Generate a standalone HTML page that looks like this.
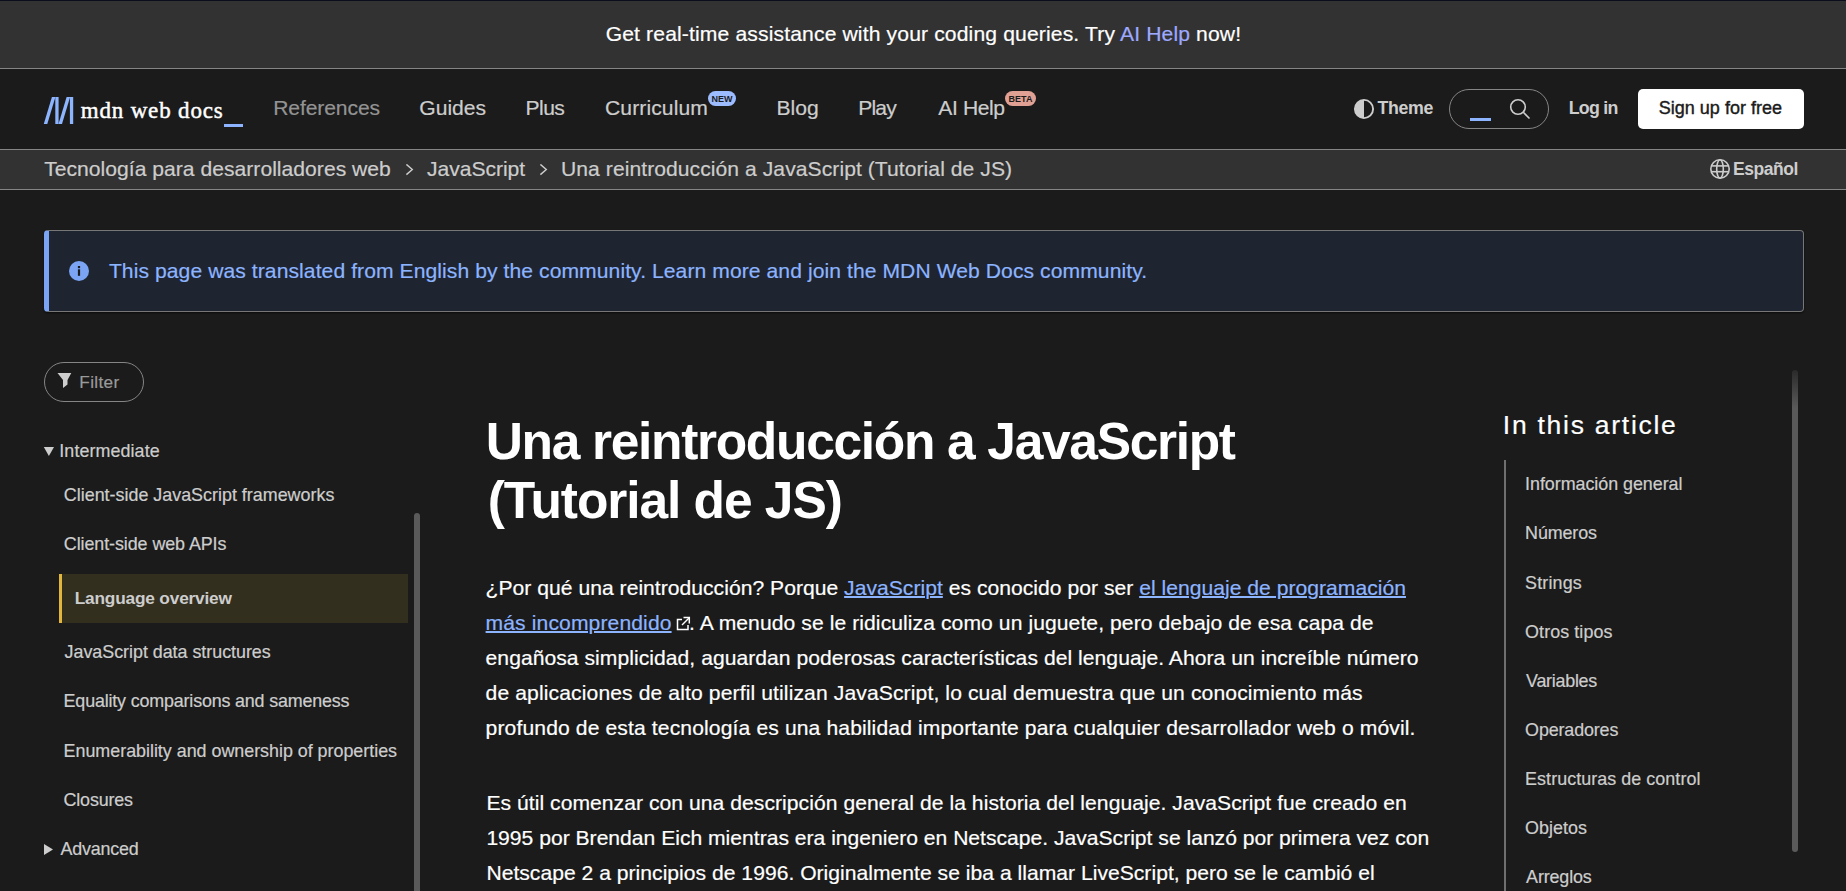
<!DOCTYPE html>
<html><head><meta charset="utf-8"><title>MDN</title><style>html,body{margin:0;padding:0;}
body{width:1846px;height:891px;overflow:hidden;background:#1b1b1b;position:relative;font-family:'Liberation Sans',sans-serif;}
.t{position:absolute;white-space:pre;font-family:'Liberation Sans',sans-serif;line-height:40px;}
.r{position:absolute;}
.badge{position:absolute;border-radius:8px;color:#1b1b1b;font:bold 9px/15px 'Liberation Sans',sans-serif;text-align:center;}
</style></head><body>
<div class="r" style="left:0px;top:0px;width:1846px;height:68px;background:#323232;"></div>
<div class="r" style="left:0px;top:0px;width:1846px;height:1px;background:#0b0d1c;"></div>
<div class="r" style="left:0px;top:68px;width:1846px;height:1px;background:#858585;"></div>
<div class="r" style="left:0px;top:149px;width:1846px;height:1px;background:#858585;"></div>
<svg class="r" style="left:0;top:0" width="260" height="150" viewBox="0 0 260 150">
<g fill="#8cb4ff">
<polygon points="43.8,124 47.3,124 55.4,97 51.9,97"/>
<rect x="55.3" y="97" width="3.3" height="27"/>
<polygon points="58.5,124 62,124 70.1,97 66.6,97"/>
<rect x="69.9" y="97" width="3.3" height="27"/>
<rect x="224" y="124" width="19" height="3"/>
</g></svg>
<div class="badge" style="left:708px;top:91px;width:28px;height:15px;background:#9dbcff;line-height:16px;">NEW</div>
<div class="badge" style="left:1005px;top:91px;width:31px;height:15px;background:#e0a194;line-height:16px;">BETA</div>
<svg class="r" style="left:1353px;top:98px" width="22" height="22" viewBox="0 0 22 22">
<circle cx="11" cy="11" r="9.1" fill="none" stroke="#cdcdcd" stroke-width="1.9"/>
<path d="M11 1.8 A9.2 9.2 0 0 0 11 20.2 Z" fill="#cdcdcd"/></svg>
<div class="r" style="left:1449px;top:89px;width:98px;height:38px;border:1px solid #858585;border-radius:20px;"></div>
<div class="r" style="left:1470px;top:118px;width:21px;height:3px;background:#8cb4ff;"></div>
<svg class="r" style="left:1506px;top:95px" width="28" height="28" viewBox="0 0 28 28">
<circle cx="12" cy="12" r="7.3" fill="none" stroke="#cdcdcd" stroke-width="1.6"/>
<line x1="17.3" y1="17.3" x2="23.5" y2="23.5" stroke="#cdcdcd" stroke-width="1.6"/></svg>
<div class="r" style="left:1638px;top:89px;width:166px;height:40px;background:#fff;border-radius:5px;"></div>
<div class="r" style="left:0px;top:150px;width:1846px;height:39px;background:#323232;"></div>
<div class="r" style="left:0px;top:189px;width:1846px;height:1px;background:#858585;"></div>
<svg class="r" style="left:405px;top:164px" width="9" height="12" viewBox="0 0 9 12">
<polyline points="1.4,0.4 7.3,5.5 1.4,10.6" fill="none" stroke="#cdcdcd" stroke-width="1.4"/></svg>
<svg class="r" style="left:539px;top:164px" width="9" height="12" viewBox="0 0 9 12">
<polyline points="1.4,0.4 7.3,5.5 1.4,10.6" fill="none" stroke="#cdcdcd" stroke-width="1.4"/></svg>
<svg class="r" style="left:1709px;top:158px" width="22" height="22" viewBox="0 0 22 22">
<g fill="none" stroke="#cdcdcd" stroke-width="1.6">
<circle cx="11" cy="11" r="9.2"/>
<ellipse cx="11" cy="11" rx="3.3" ry="9.2"/>
<line x1="2" y1="7.9" x2="20" y2="7.9"/>
<line x1="2" y1="13.7" x2="20" y2="13.7"/>
</g></svg>
<div class="r" style="left:44px;top:230px;width:1760px;height:82px;box-sizing:border-box;background:#1f2530;border:1px solid #777;border-left:5px solid #7ba4f5;border-radius:4px;box-shadow:0 1px 2px rgba(0,0,0,.6);"></div>
<svg class="r" style="left:69px;top:261px" width="20" height="20" viewBox="0 0 20 20">
<circle cx="10" cy="10" r="10" fill="#7ba4f5"/>
<rect x="8.9" y="8.3" width="2.2" height="6.5" fill="#1b1b1b"/>
<rect x="8.9" y="5" width="2.2" height="2.2" fill="#1b1b1b"/></svg>
<div class="r" style="left:44px;top:362px;width:98px;height:38px;border:1px solid #858585;border-radius:20px;"></div>
<svg class="r" style="left:57px;top:372px" width="15" height="17" viewBox="0 0 15 17">
<path d="M0.5 0.9 H14.3 L10.5 8 V12.5 L6 16 V8 Z" fill="#cdcdcd"/></svg>
<svg class="r" style="left:43px;top:446px" width="12" height="11" viewBox="0 0 12 11"><polygon points="0.8,1 11,1 5.9,10" fill="#cdcdcd"/></svg>
<div class="r" style="left:59px;top:574px;width:349px;height:49px;background:#332f1e;"></div>
<div class="r" style="left:59px;top:574px;width:3px;height:49px;background:#e2b53c;"></div>
<svg class="r" style="left:43px;top:843px" width="11" height="13" viewBox="0 0 11 13"><polygon points="1,1 10,6.5 1,12" fill="#cdcdcd"/></svg>
<div class="r" style="left:414px;top:513px;width:6px;height:400px;background:#5a5a5a;border-radius:3px;"></div>
<svg class="r" style="left:676px;top:616px" width="15" height="15" viewBox="0 0 15 15">
<g fill="none" stroke="#fff" stroke-width="1.5">
<polyline points="6,3.5 1.5,3.5 1.5,13.5 12,13.5 12,9"/>
<line x1="6" y1="9" x2="13" y2="2"/>
<polyline points="7.5,1.5 13.3,1.5 13.3,7.5"/>
</g></svg>
<div class="r" style="left:1504px;top:460px;width:2px;height:431px;background:#6f6f6f;"></div>
<div class="r" style="left:1792px;top:370px;width:6px;height:482px;border-radius:3px;background:linear-gradient(#2a2a2a 0px,#5a5a5a 38px,#5a5a5a 100%);"></div>
<div class="t" style="left:605.70px;top:14px;font-size:21.1px;color:#fff;letter-spacing:0.141px;-webkit-text-stroke-width:0.2px;">Get real-time assistance with your coding queries. Try <span style="color:#9ea9ff">AI Help</span> now!</div>
<div class="t" style="left:80.70px;top:91px;font-size:23px;color:#fff;letter-spacing:0.836px;font-family:'Liberation Serif',serif;-webkit-text-stroke:0.45px #fff;">mdn web docs</div>
<div class="t" style="left:273.20px;top:88px;font-size:21.1px;color:#939393;letter-spacing:-0.111px;-webkit-text-stroke-width:0.2px;">References</div>
<div class="t" style="left:419.30px;top:88px;font-size:21.1px;color:#cdcdcd;-webkit-text-stroke-width:0.2px;">Guides</div>
<div class="t" style="left:525.60px;top:88px;font-size:21.1px;color:#cdcdcd;letter-spacing:-0.600px;-webkit-text-stroke-width:0.2px;">Plus</div>
<div class="t" style="left:605.00px;top:88px;font-size:21.1px;color:#cdcdcd;letter-spacing:0.100px;-webkit-text-stroke-width:0.2px;">Curriculum</div>
<div class="t" style="left:776.50px;top:88px;font-size:21.1px;color:#cdcdcd;letter-spacing:-0.033px;-webkit-text-stroke-width:0.2px;">Blog</div>
<div class="t" style="left:858.20px;top:88px;font-size:21.1px;color:#cdcdcd;letter-spacing:-0.800px;-webkit-text-stroke-width:0.2px;">Play</div>
<div class="t" style="left:938.30px;top:88px;font-size:21.1px;color:#cdcdcd;letter-spacing:-0.400px;-webkit-text-stroke-width:0.2px;">AI Help</div>
<div class="t" style="left:1377.40px;top:88px;font-size:17.8px;color:#cdcdcd;font-weight:700;letter-spacing:-0.325px;">Theme</div>
<div class="t" style="left:1568.70px;top:88px;font-size:17.8px;color:#cdcdcd;font-weight:700;letter-spacing:-0.740px;">Log in</div>
<div class="t" style="left:1658.70px;top:88px;font-size:18px;color:#1b1b1b;letter-spacing:0.020px;-webkit-text-stroke-width:0.2px;-webkit-text-stroke-width:0.4px;">Sign up for free</div>
<div class="t" style="left:44.20px;top:149px;font-size:21.1px;color:#cdcdcd;letter-spacing:0.021px;-webkit-text-stroke-width:0.2px;">Tecnología para desarrolladores web</div>
<div class="t" style="left:427.10px;top:149px;font-size:21.1px;color:#cdcdcd;letter-spacing:-0.056px;-webkit-text-stroke-width:0.2px;">JavaScript</div>
<div class="t" style="left:561.00px;top:149px;font-size:21.1px;color:#cdcdcd;letter-spacing:0.060px;-webkit-text-stroke-width:0.2px;">Una reintroducción a JavaScript (Tutorial de JS)</div>
<div class="t" style="left:1733.00px;top:149px;font-size:17.5px;color:#cdcdcd;font-weight:700;letter-spacing:-0.467px;">Español</div>
<div class="t" style="left:108.90px;top:251px;font-size:21.1px;color:#8cb4ff;letter-spacing:0.075px;-webkit-text-stroke-width:0.2px;">This page was translated from English by the community. Learn more and join the MDN Web Docs community.</div>
<div class="t" style="left:79.30px;top:362px;font-size:17.2px;color:#9a9a9a;letter-spacing:0.340px;-webkit-text-stroke-width:0.2px;">Filter</div>
<div class="t" style="left:59.30px;top:431px;font-size:17.9px;color:#cdcdcd;letter-spacing:0.082px;-webkit-text-stroke-width:0.2px;">Intermediate</div>
<div class="t" style="left:63.80px;top:475px;font-size:17.9px;color:#cdcdcd;letter-spacing:0.003px;-webkit-text-stroke-width:0.2px;">Client-side JavaScript frameworks</div>
<div class="t" style="left:63.80px;top:524px;font-size:17.9px;color:#cdcdcd;letter-spacing:-0.074px;-webkit-text-stroke-width:0.2px;">Client-side web APIs</div>
<div class="t" style="left:74.70px;top:578px;font-size:17.3px;color:#cdcdcd;font-weight:700;letter-spacing:-0.194px;">Language overview</div>
<div class="t" style="left:64.60px;top:632px;font-size:17.9px;color:#cdcdcd;letter-spacing:-0.028px;-webkit-text-stroke-width:0.2px;">JavaScript data structures</div>
<div class="t" style="left:63.60px;top:681px;font-size:17.9px;color:#cdcdcd;letter-spacing:-0.169px;-webkit-text-stroke-width:0.2px;">Equality comparisons and sameness</div>
<div class="t" style="left:63.60px;top:731px;font-size:17.9px;color:#cdcdcd;letter-spacing:-0.018px;-webkit-text-stroke-width:0.2px;">Enumerability and ownership of properties</div>
<div class="t" style="left:63.60px;top:780px;font-size:17.9px;color:#cdcdcd;letter-spacing:-0.186px;-webkit-text-stroke-width:0.2px;">Closures</div>
<div class="t" style="left:60.60px;top:829px;font-size:17.9px;color:#cdcdcd;letter-spacing:-0.200px;-webkit-text-stroke-width:0.2px;">Advanced</div>
<div class="t" style="left:485.70px;top:421px;font-size:51.5px;color:#fff;font-weight:700;letter-spacing:-1.320px;">Una reintroducción a JavaScript</div>
<div class="t" style="left:487.75px;top:480px;font-size:51.5px;color:#fff;font-weight:700;letter-spacing:-1.063px;">(Tutorial de JS)</div>
<div class="t" style="left:485.60px;top:568px;font-size:21.1px;color:#fff;letter-spacing:0.024px;-webkit-text-stroke-width:0.2px;">¿Por qué una reintroducción? Porque <span style="color:#8cb4ff;text-decoration:underline;text-decoration-thickness:1.5px;text-underline-offset:1px;">JavaScript</span> es conocido por ser <span style="color:#8cb4ff;text-decoration:underline;text-decoration-thickness:1.5px;text-underline-offset:1px;">el lenguaje de programación</span></div>
<div class="t" style="left:485.60px;top:603px;font-size:21.1px;color:#fff;letter-spacing:0.112px;-webkit-text-stroke-width:0.2px;"><span style="color:#8cb4ff;text-decoration:underline;text-decoration-thickness:1.5px;text-underline-offset:1px;">más incomprendido</span></div>
<div class="t" style="left:689.00px;top:603px;font-size:21.1px;color:#fff;letter-spacing:0.080px;-webkit-text-stroke-width:0.2px;">. A menudo se le ridiculiza como un juguete, pero debajo de esa capa de</div>
<div class="t" style="left:485.60px;top:638px;font-size:21.1px;color:#fff;letter-spacing:0.044px;-webkit-text-stroke-width:0.2px;">engañosa simplicidad, aguardan poderosas características del lenguaje. Ahora un increíble número</div>
<div class="t" style="left:485.60px;top:673px;font-size:21.1px;color:#fff;letter-spacing:0.115px;-webkit-text-stroke-width:0.2px;">de aplicaciones de alto perfil utilizan JavaScript, lo cual demuestra que un conocimiento más</div>
<div class="t" style="left:485.60px;top:708px;font-size:21.1px;color:#fff;letter-spacing:0.122px;-webkit-text-stroke-width:0.2px;">profundo de esta tecnología es una habilidad importante para cualquier desarrollador web o móvil.</div>
<div class="t" style="left:486.40px;top:783px;font-size:21.1px;color:#fff;letter-spacing:0.047px;-webkit-text-stroke-width:0.2px;">Es útil comenzar con una descripción general de la historia del lenguaje. JavaScript fue creado en</div>
<div class="t" style="left:486.40px;top:818px;font-size:21.1px;color:#fff;letter-spacing:0.001px;-webkit-text-stroke-width:0.2px;">1995 por Brendan Eich mientras era ingeniero en Netscape. JavaScript se lanzó por primera vez con</div>
<div class="t" style="left:486.40px;top:853px;font-size:21.1px;color:#fff;letter-spacing:0.020px;-webkit-text-stroke-width:0.2px;">Netscape 2 a principios de 1996. Originalmente se iba a llamar LiveScript, pero se le cambió el</div>
<div class="t" style="left:1502.80px;top:405px;font-size:26.5px;color:#fff;letter-spacing:1.736px;-webkit-text-stroke-width:0.2px;">In this article</div>
<div class="t" style="left:1525.10px;top:464px;font-size:17.9px;color:#cdcdcd;letter-spacing:-0.044px;-webkit-text-stroke-width:0.2px;">Información general</div>
<div class="t" style="left:1525.10px;top:513px;font-size:17.9px;color:#cdcdcd;letter-spacing:-0.117px;-webkit-text-stroke-width:0.2px;">Números</div>
<div class="t" style="left:1525.10px;top:563px;font-size:17.9px;color:#cdcdcd;letter-spacing:0.150px;-webkit-text-stroke-width:0.2px;">Strings</div>
<div class="t" style="left:1525.10px;top:612px;font-size:17.9px;color:#cdcdcd;letter-spacing:0.080px;-webkit-text-stroke-width:0.2px;">Otros tipos</div>
<div class="t" style="left:1526.10px;top:661px;font-size:17.9px;color:#cdcdcd;letter-spacing:-0.262px;-webkit-text-stroke-width:0.2px;">Variables</div>
<div class="t" style="left:1525.10px;top:710px;font-size:17.9px;color:#cdcdcd;letter-spacing:-0.133px;-webkit-text-stroke-width:0.2px;">Operadores</div>
<div class="t" style="left:1525.10px;top:759px;font-size:17.9px;color:#cdcdcd;letter-spacing:0.062px;-webkit-text-stroke-width:0.2px;">Estructuras de control</div>
<div class="t" style="left:1525.10px;top:808px;font-size:17.9px;color:#cdcdcd;letter-spacing:0.017px;-webkit-text-stroke-width:0.2px;">Objetos</div>
<div class="t" style="left:1526.10px;top:857px;font-size:17.9px;color:#cdcdcd;letter-spacing:-0.143px;-webkit-text-stroke-width:0.2px;">Arreglos</div>
</body></html>
